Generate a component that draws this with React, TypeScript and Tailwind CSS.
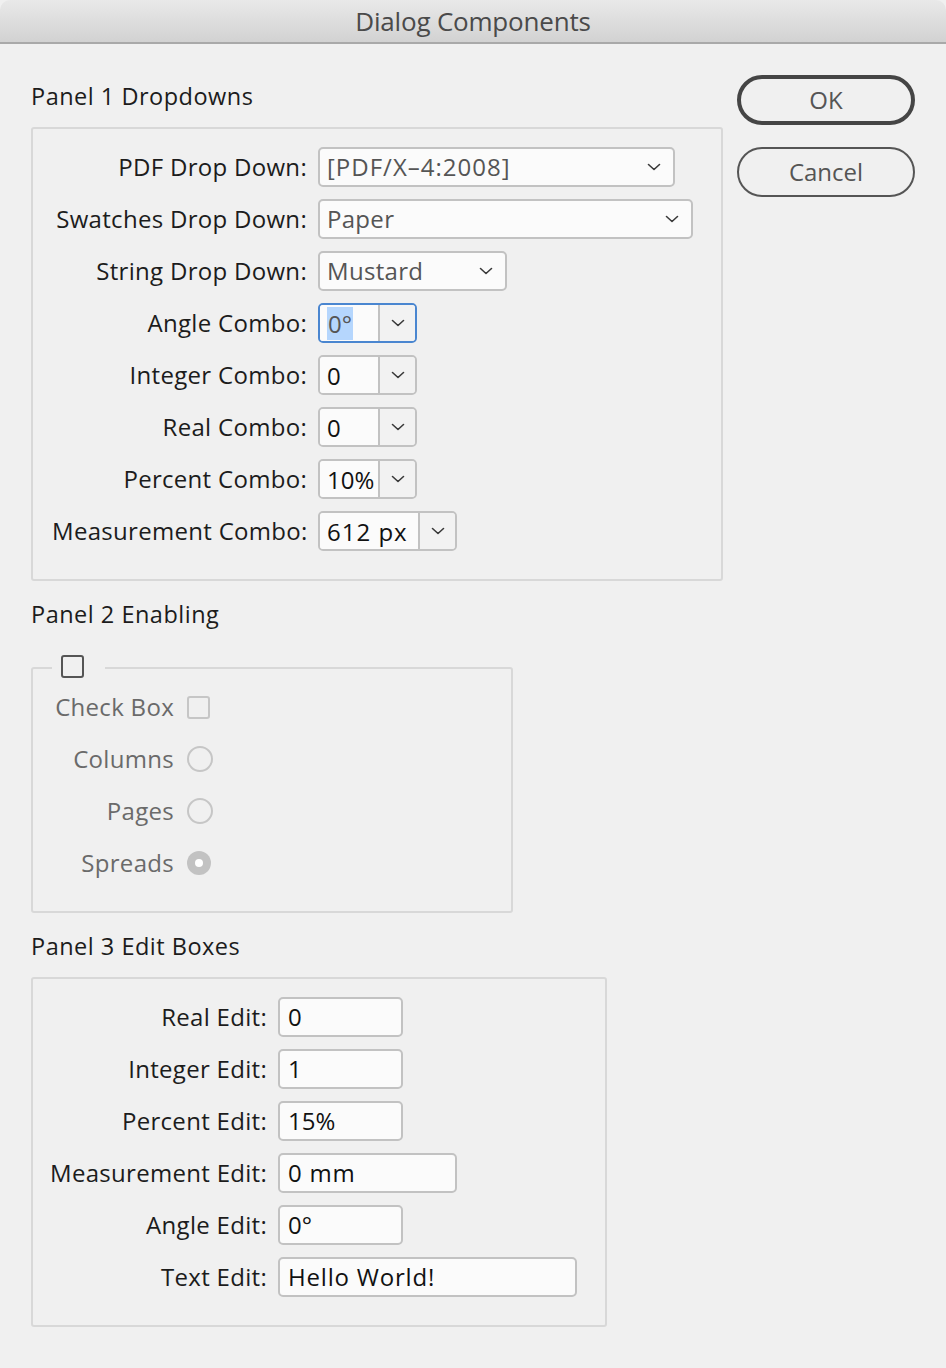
import React from 'react'

// ─── Shared bits ──────────────────────────────────────────────
const FONT = { fontFamily: '"Open Sans", "Noto Sans", sans-serif' }

const Chevron = () => (
  <svg width="14" height="8" viewBox="0 0 14 8" fill="none">
    <path d="M1.5 1.5 L7 6.5 L12.5 1.5" stroke="#3a3a3a" strokeWidth="1.6" strokeLinecap="round" strokeLinejoin="round" />
  </svg>
)

const Label = ({ children, w, dim }: { children: React.ReactNode; w: string; dim?: boolean }) => (
  <span
    className={`${w} shrink-0 text-right text-[24px] leading-none tracking-[0.3px] whitespace-nowrap ${
      dim ? 'text-[#6a6a6a]' : 'text-[#1c1c1c]'
    }`}
  >
    {children}
  </span>
)

// ─── Controls ─────────────────────────────────────────────────
const Dropdown = ({ value, w, wide }: { value: string; w: string; wide?: boolean }) => (
  <div className={`${w} h-10 flex items-center justify-between pl-[7px] pr-[12px] rounded-[5px] border-2 border-[#c2c2c2] bg-[#fbfbfb]`}>
    <span className={`text-[24px] text-[#555] ${wide ? 'tracking-[1px]' : 'tracking-[0.3px]'}`}>{value}</span>
    <Chevron />
  </div>
)

const Combo = ({ value, w, focused, wide }: { value: string; w: string; focused?: boolean; wide?: boolean }) => (
  <div
    className={`${w} h-10 flex rounded-[5px] border-2 overflow-hidden ${
      focused ? 'border-[#4a86d0]' : 'border-[#c2c2c2]'
    }`}
  >
    <div className="flex-1 flex items-center pl-[7px] bg-[#fbfbfb] border-r-2 border-[#c2c2c2]">
      <span
        className={`text-[24px] leading-[33px] ${wide ? 'tracking-[1px]' : ''} ${
          focused ? 'bg-[#b5d6fd] text-[#555] px-[1px]' : 'text-[#111]'
        }`}
      >
        {value}
      </span>
    </div>
    <div className="w-[35px] flex items-center justify-center bg-[#f2f2f2]">
      <Chevron />
    </div>
  </div>
)

const Edit = ({ value, w, wide }: { value: string; w: string; wide?: boolean }) => (
  <div className={`${w} h-10 flex items-center pl-[8px] rounded-[5px] border-2 border-[#c2c2c2] bg-[#fbfbfb]`}>
    <span className={`text-[24px] text-[#111] ${wide ? 'tracking-[0.8px]' : ''}`}>{value}</span>
  </div>
)

const Radio = ({ on }: { on?: boolean }) =>
  on ? (
    <span className="w-[24px] h-[24px] rounded-full bg-[#c2c2c2] flex items-center justify-center">
      <span className="w-[8px] h-[8px] rounded-full bg-white" />
    </span>
  ) : (
    <span className="w-[26px] h-[26px] rounded-full border-2 border-[#c6c6c6]" />
  )

const Heading = ({ children }: { children: React.ReactNode }) => (
  <h2 className="text-[23.5px] leading-[32px] tracking-[0.5px] text-[#1c1c1c]">{children}</h2>
)

// ─── Panels ───────────────────────────────────────────────────
const dropRows = [
  { label: 'PDF Drop Down:', el: <Dropdown value="[PDF/X–4:2008]" w="w-[357px]" wide /> },
  { label: 'Swatches Drop Down:', el: <Dropdown value="Paper" w="w-[375px]" /> },
  { label: 'String Drop Down:', el: <Dropdown value="Mustard" w="w-[189px]" /> },
  { label: 'Angle Combo:', el: <Combo value="0°" w="w-[99px]" focused /> },
  { label: 'Integer Combo:', el: <Combo value="0" w="w-[99px]" /> },
  { label: 'Real Combo:', el: <Combo value="0" w="w-[99px]" /> },
  { label: 'Percent Combo:', el: <Combo value="10%" w="w-[99px]" /> },
  { label: 'Measurement Combo:', el: <Combo value="612 px" w="w-[139px]" wide /> },
]

const editRows = [
  { label: 'Real Edit:', value: '0', w: 'w-[125px]' },
  { label: 'Integer Edit:', value: '1', w: 'w-[125px]' },
  { label: 'Percent Edit:', value: '15%', w: 'w-[125px]' },
  { label: 'Measurement Edit:', value: '0 mm', w: 'w-[179px]', wide: true },
  { label: 'Angle Edit:', value: '0°', w: 'w-[125px]' },
  { label: 'Text Edit:', value: 'Hello World!', w: 'w-[299px]', wide: true },
]

export default function App() {
  return (
    <div className="w-[946px] h-[1368px] bg-[#f0f0f0] overflow-hidden" style={FONT}>
      {/* Title bar */}
      <div className="h-[44px] flex items-center justify-center rounded-t-[10px] border-b-2 border-[#a9a9a9] bg-gradient-to-b from-[#e9e9e9] to-[#d2d2d2]">
        <span className="text-[26px] text-[#4a4a4a] tracking-[-0.2px]">Dialog Components</span>
      </div>

      <div className="flex pl-[31px]">
        {/* Left column */}
        <div className="w-[692px] pt-[36px]">
          <Heading>Panel 1 Dropdowns</Heading>
          <div className="mt-[15px] w-[692px] rounded-[3px] border-2 border-[#d8d8d8] pt-[18px] pb-[28px] pl-[19px] flex flex-col gap-[12px]">
            {dropRows.map((r) => (
              <div key={r.label} className="h-10 flex items-center gap-[11px]">
                <Label w="w-[255px]">{r.label}</Label>
                {r.el}
              </div>
            ))}
          </div>

          <div className="mt-[17px]">
            <Heading>Panel 2 Enabling</Heading>
          </div>
          <div className="relative mt-[37px] w-[482px] rounded-[3px] border-2 border-[#d8d8d8] pt-[18px] pb-[28px] pl-[19px] flex flex-col gap-[12px]">
            {/* enabling checkbox sitting on the frame */}
            <span className="absolute -top-[14px] left-[19px] pl-[9px] pr-[21px] bg-[#f0f0f0]">
              <span className="block w-[23px] h-[23px] rounded-[3px] border-2 border-[#555]" />
            </span>
            {[
              { label: 'Check Box', el: <span className="w-[23px] h-[23px] rounded-[3px] border-2 border-[#c6c6c6]" /> },
              { label: 'Columns', el: <Radio /> },
              { label: 'Pages', el: <Radio /> },
              { label: 'Spreads', el: <Radio on /> },
            ].map((r) => (
              <div key={r.label} className="h-10 flex items-center gap-[13px]">
                <Label w="w-[122px]" dim>{r.label}</Label>
                {r.el}
              </div>
            ))}
          </div>

          <div className="mt-[17px]">
            <Heading>Panel 3 Edit Boxes</Heading>
          </div>
          <div className="mt-[15px] w-[576px] rounded-[3px] border-2 border-[#d8d8d8] pt-[18px] pb-[28px] pl-[17px] flex flex-col gap-[12px]">
            {editRows.map((r) => (
              <div key={r.label} className="h-10 flex items-center gap-[11px]">
                <Label w="w-[217px]">{r.label}</Label>
                <Edit value={r.value} w={r.w} wide={r.wide} />
              </div>
            ))}
          </div>
        </div>

        {/* Buttons */}
        <div className="ml-[14px] pt-[31px] flex flex-col gap-[22px]">
          <button className="w-[178px] h-[50px] rounded-full border-[4px] border-[#454545] text-[24px] text-[#555]">
            OK
          </button>
          <button className="w-[178px] h-[50px] rounded-full border-2 border-[#555] text-[24px] text-[#555]">
            Cancel
          </button>
        </div>
      </div>
    </div>
  )
}
